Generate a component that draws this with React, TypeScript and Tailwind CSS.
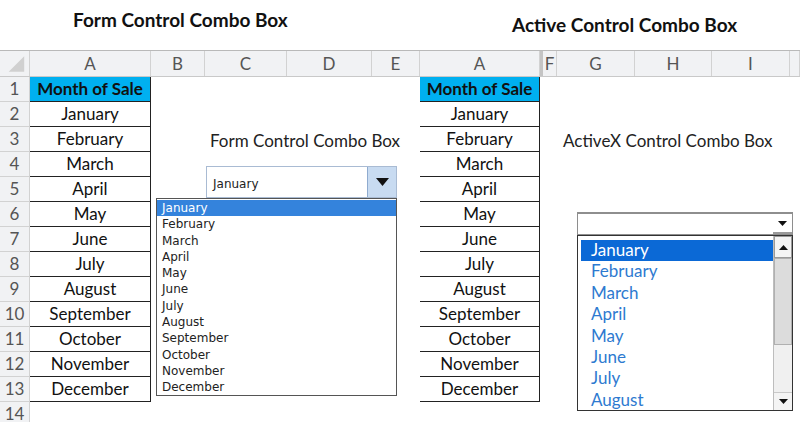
import React from 'react';

const months = [
  'January',
  'February',
  'March',
  'April',
  'May',
  'June',
  'July',
  'August',
  'September',
  'October',
  'November',
  'December',
];

const font = { fontFamily: 'Lato, "Open Sans", sans-serif' };
const tahoma = { fontFamily: '"DejaVu Sans", Verdana, sans-serif' };

type Col = { label: string; w: string; extra?: string };

const leftCols: Col[] = [
  { label: 'A', w: 'w-[121px]' },
  { label: 'B', w: 'w-[54px]' },
  { label: 'C', w: 'w-[82px]' },
  { label: 'D', w: 'w-[85px]' },
  { label: 'E', w: 'w-[48px]' },
];

const rightCols: Col[] = [
  { label: 'A', w: 'w-[120px]' },
  { label: 'F', w: 'w-[17px]', extra: 'border-l-[3px] border-l-[#c4c4c4]' },
  { label: 'G', w: 'w-[78px]' },
  { label: 'H', w: 'w-[77px]' },
  { label: 'I', w: 'w-[78px]' },
  { label: '', w: 'w-[10px]' },
];

function Header({ cols, corner }: { cols: Col[]; corner?: boolean }) {
  return (
    <div className="flex h-[27px] bg-[#f1f2f4] border-t border-t-[#b9b9b9] border-b border-b-[#c9c9c9] text-[17px] text-[#555]">
      {corner && (
        <div className="w-[30px] border-r border-[#d2d2d2] flex items-end justify-end">
          <svg width="30" height="25" viewBox="0 0 30 25">
            <polygon points="25,5 25,21 9,21" fill="#d0d0d0" />
          </svg>
        </div>
      )}
      {cols.map((c) => (
        <div
          key={c.label + c.w}
          className={`${c.w} ${c.extra ?? ''} shrink-0 border-r border-[#d2d2d2] flex items-center justify-center`}
        >
          {c.label}
        </div>
      ))}
    </div>
  );
}

function DataCell({ row, w }: { row: number; w: string }) {
  if (row > 13) return <div className={`${w} shrink-0`} />;
  const head = row === 1;
  return (
    <div
      className={`${w} shrink-0 border-r border-b border-[#222] flex items-center justify-center text-[17px] text-[#111] ${
        head ? 'bg-[#00b0f0] font-bold' : 'bg-white'
      }`}
    >
      {head ? 'Month of Sale' : months[row - 2]}
    </div>
  );
}

function LeftSheet() {
  const rows = Array.from({ length: 14 }, (_, i) => i + 1);
  return (
    <div className="w-[420px] shrink-0">
      <Header cols={leftCols} corner />
      {rows.map((r) => (
        <div key={r} className="flex h-[25px]">
          <div className="w-[30px] shrink-0 bg-[#f1f2f4] border-r border-b border-[#d2d2d2] flex items-center justify-center text-[17px] text-[#555]">
            {r}
          </div>
          <DataCell row={r} w="w-[121px]" />
          <div className="w-[54px] shrink-0" />
          <div className="w-[82px] shrink-0 relative">
            {r === 3 && (
              <span className="absolute left-[5px] top-[1px] whitespace-nowrap text-[17px] text-[#222]">
                Form Control Combo Box
              </span>
            )}
          </div>
        </div>
      ))}
    </div>
  );
}

function RightSheet() {
  const rows = Array.from({ length: 14 }, (_, i) => i + 1);
  return (
    <div className="w-[380px] shrink-0">
      <Header cols={rightCols} />
      {rows.map((r) => (
        <div key={r} className="flex h-[25px]">
          <DataCell row={r} w="w-[120px]" />
          <div className="w-[17px] shrink-0" />
          <div className="w-[78px] shrink-0 relative">
            {r === 3 && (
              <span className="absolute left-[6px] top-[1px] whitespace-nowrap text-[17px] text-[#222]">
                ActiveX Control Combo Box
              </span>
            )}
          </div>
        </div>
      ))}
    </div>
  );
}

function FormCombo() {
  return (
    <>
      <div className="absolute left-[206px] top-[166px] w-[191px] h-[32px] flex bg-white border border-[#a9bbd3]" style={tahoma}>
        <div className="flex-1 flex items-center pl-[6px] pt-[3px] text-[12px] text-[#222]">January</div>
        <div className="w-[29px] bg-[#c8dbf1] border-l border-[#8fabcf] flex items-center justify-center">
          <svg width="13" height="8" viewBox="0 0 13 8">
            <polygon points="0,0 13,0 6.5,8" fill="#111" />
          </svg>
        </div>
      </div>
      <div
        className="absolute left-[156px] top-[198px] w-[241px] h-[198px] bg-white border border-[#555] pt-[1px] text-[12px] text-[#222]"
        style={tahoma}
      >
        {months.map((m, i) => (
          <div
            key={m}
            className={`h-[16.3px] leading-[16px] pl-[5px] ${i === 0 ? 'bg-[#3483dc] text-white' : ''}`}
          >
            {m}
          </div>
        ))}
      </div>
    </>
  );
}

function ActiveXCombo() {
  return (
    <>
      <div className="absolute left-[577px] top-[212px] w-[216px] h-[23px] flex bg-white border border-[#8e8e8e] border-t-2">
        <div className="flex-1" />
        <div className="w-[19px] border-b-2 border-[#9a9a9a] flex items-center justify-center">
          <svg width="9" height="5" viewBox="0 0 9 5">
            <polygon points="0,0 9,0 4.5,5" fill="#111" />
          </svg>
        </div>
      </div>
      <div className="absolute left-[577px] top-[235px] w-[216px] h-[176px] flex bg-white border border-[#333] overflow-hidden">
        <div className="flex-1 pl-[3px] pt-[4px] text-[17px] text-[#2e7ad0]">
          {months.slice(0, 8).map((m, i) => (
            <div
              key={m}
              className={`h-[21.4px] leading-[20px] pl-[10px] ${i === 0 ? 'bg-[#0b69d6] text-white' : ''}`}
            >
              {m}
            </div>
          ))}
        </div>
        <div className="w-[19px] shrink-0 flex flex-col bg-[#f0f0f0] border-l border-[#bdbdbd]">
          <div className="h-[22px] border border-[#9a9a9a] bg-[#f4f4f4] flex items-center justify-center">
            <svg width="9" height="5" viewBox="0 0 9 5">
              <polygon points="0,5 9,5 4.5,0" fill="#111" />
            </svg>
          </div>
          <div className="h-[87px] bg-[#dcdcdc] border border-[#b0b0b0]" />
          <div className="flex-1" />
          <div className="h-[18px] border-t border-[#c9c9c9] bg-[#f4f4f4] flex items-center justify-center">
            <svg width="9" height="5" viewBox="0 0 9 5">
              <polygon points="0,0 9,0 4.5,5" fill="#111" />
            </svg>
          </div>
        </div>
      </div>
    </>
  );
}

export default function App() {
  return (
    <div className="relative w-[800px] h-[422px] overflow-hidden bg-white" style={font}>
      {/* Titles */}
      <div className="flex h-[50px] text-[19px] leading-[24px] font-bold text-[#111]">
        <div className="w-[420px] pl-[73px] pt-[8px]">Form Control Combo Box</div>
        <div className="pl-[92px] pt-[13px]">Active Control Combo Box</div>
      </div>

      {/* Sheets */}
      <div className="flex">
        <LeftSheet />
        <RightSheet />
      </div>

      <FormCombo />
      <ActiveXCombo />
    </div>
  );
}
